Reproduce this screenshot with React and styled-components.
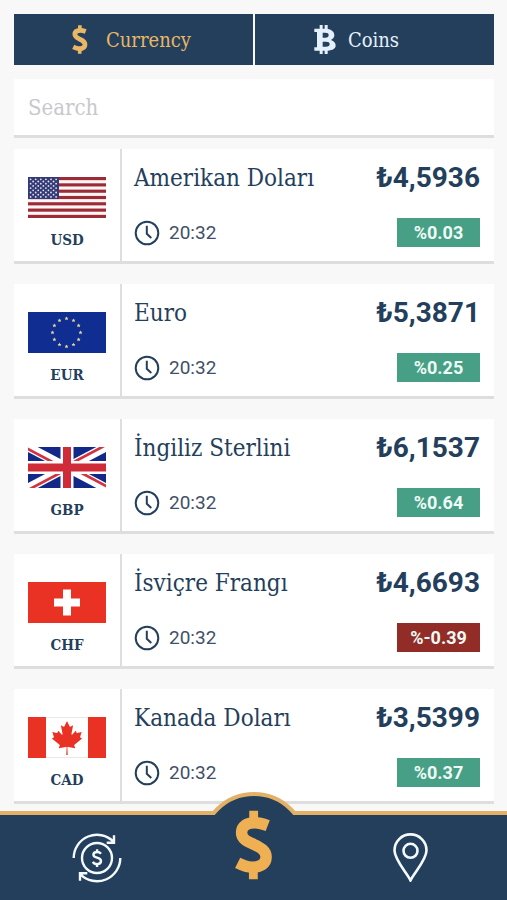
import React from "react";
import styled, { createGlobalStyle } from "styled-components";

const navy = "#243f5c";
const gold = "#efb054";
const slab = `"Roboto Slab", "DejaVu Serif Condensed", "DejaVu Serif", serif`;
const sans = `Roboto, "Liberation Sans", sans-serif`;

const GlobalStyle = createGlobalStyle`
  * {
    box-sizing: border-box;
  }
  body {
    margin: 0;
    background-color: #f8f8f8;
    color: ${navy};
    font-family: ${slab};
  }
  svg {
    display: block;
    flex-shrink: 0;
  }
`;

const Page = styled.div`
  padding: 14px 13px 97px 14px;
`;

const Tabs = styled.div`
  display: grid;
  grid-template-columns: 1fr 1fr;
  gap: 2px;
`;

const Tab = styled.button`
  display: flex;
  align-items: center;
  justify-content: center;
  gap: ${(props) => (props.$active ? "18px" : "12px")};
  height: 51px;
  padding: 0 ${(props) => (props.$active ? "4px" : "36px")} 0 0;
  border: 0;
  background-color: ${navy};
  color: ${(props) => (props.$active ? "#e9b866" : "#e4f1fd")};
  font-family: ${slab};
  font-size: 20px;
  cursor: pointer;
`;

const Search = styled.input`
  display: block;
  width: 100%;
  height: 59px;
  margin: 14px 0 11px;
  padding: 0 14px;
  border: 0;
  border-bottom: 3px solid #dedede;
  outline: 0;
  background-color: white;
  color: ${navy};
  font-family: ${slab};
  font-size: 22px;
  &::placeholder {
    color: #c8c8cc;
    opacity: 1;
  }
`;

const List = styled.ul`
  display: flex;
  flex-direction: column;
  gap: 20px;
  margin: 0;
  padding: 0;
  list-style: none;
`;

const Card = styled.li`
  display: flex;
  height: 115px;
  border-bottom: 3px solid #dedede;
  background-color: white;
`;

const Country = styled.div`
  display: flex;
  flex-direction: column;
  align-items: center;
  gap: 12px;
  width: 108px;
  padding-top: 28px;
  border-right: 2px solid #dedede;
`;

const Code = styled.span`
  font-size: 15px;
  font-weight: bold;
  line-height: 20px;
`;

const Details = styled.div`
  flex: 1;
  display: flex;
  flex-direction: column;
  justify-content: space-between;
  padding: 12px 14px 14px 12px;
`;

const Row = styled.div`
  display: flex;
  align-items: center;
  justify-content: space-between;
`;

const Name = styled.span`
  font-size: 24px;
  line-height: 34px;
`;

const Price = styled.span`
  font-family: ${sans};
  font-size: 28px;
  font-weight: bold;
  line-height: 34px;
`;

const Time = styled.span`
  display: flex;
  align-items: center;
  gap: 9px;
  font-family: ${sans};
  font-size: 19px;
  color: #3f5068;
`;

const Change = styled.span`
  width: 83px;
  background-color: ${(props) => (props.$down ? "#922c26" : "#479f86")};
  color: #eefaf5;
  font-family: ${sans};
  font-size: 18px;
  font-weight: bold;
  line-height: 29px;
  text-align: center;
`;

const BottomBar = styled.nav`
  position: fixed;
  right: 0;
  bottom: 0;
  left: 0;
  display: grid;
  grid-template-columns: repeat(3, 1fr);
  height: 89px;
  padding: 0 18px;
  border-top: 4px solid #e3b165;
  background-color: ${navy};
`;

const Bump = styled.svg`
  position: absolute;
  top: -23px;
  left: 50%;
  transform: translateX(-50%);
`;

const BarLink = styled.a`
  display: flex;
  align-items: center;
  justify-content: center;
  color: #f4faff;
`;

const MainLink = styled(BarLink)`
  position: relative;
  align-items: flex-start;
  margin-top: -5px;
  color: ${gold};
`;

function DollarIcon({ width, height }) {
  return (
    <svg width={width} height={height} viewBox="555 88 116 214" aria-hidden="true">
      <g fill="none" stroke="currentColor">
        <path
          strokeWidth="35"
          d="M655 136C642 131 630 127 616 127C590 127 575 138 575 157C575 177 592 184 612 193C634 203 650 212 650 232C650 252 634 263 607 263C591 263 577 257 563 250"
        />
        <path strokeWidth="27" strokeLinecap="square" d="M612 104V116M611 274V286" />
      </g>
    </svg>
  );
}

function BitcoinIcon() {
  return (
    <svg width="22" height="29" viewBox="189 75 66 87" aria-hidden="true">
      <path
        fill="currentColor"
        fillRule="evenodd"
        d="M190 86H206V75H215V86H221V75H230V87C243 89 250 96 250 106C250 113 246 117 240 120C249 123 254 129 254 136C254 146 246 151 230 152V162H221V152H215V162H206V152H190V142H198V96H190ZM215 98V113H223C230 113 233 111 233 105C233 100 230 98 223 98ZM215 125V140H225C232 140 236 138 236 132C236 127 232 125 225 125Z"
      />
    </svg>
  );
}

function ClockIcon() {
  return (
    <svg width="26" height="26" viewBox="-1 -1 26 26" aria-hidden="true">
      <g fill="none" stroke={navy} strokeWidth="2">
        <circle cx="12" cy="12" r="11.3" />
        <path d="M11.8 4.7V12.8L16.3 17" />
      </g>
    </svg>
  );
}

function ExchangeIcon() {
  return (
    <svg width="50" height="50" viewBox="0 0 50 50" aria-hidden="true">
      <g fill="none" stroke="currentColor" strokeWidth="2.4">
        <circle cx="25" cy="25" r="15" />
        <path d="M1.7 25A23.3 23.3 0 0 1 41.5 8.6M42 2.3V9.7H34.7" />
        <path d="M48.3 25A23.3 23.3 0 0 1 8.5 41.4M8 47.7V40.3H15.3" />
        <path d="M29 20.8C28 19.5 26.8 19 25.1 19C22.9 19 21.4 20.1 21.4 21.8C21.4 25.7 29 23.7 29 28.1C29 30 27.4 31.1 25.2 31.1C23.2 31.1 21.7 30.3 20.8 28.8M25.1 16.3V19M25.1 31V34" />
      </g>
    </svg>
  );
}

function PinIcon() {
  return (
    <svg width="35" height="49" viewBox="0 0 35 49" aria-hidden="true">
      <g fill="none" stroke="currentColor" strokeWidth="2.6">
        <path d="M17.5 47.3C13.5 39.5 1.5 26.5 1.5 17.4A16 16 0 0 1 33.5 17.4C33.5 26.5 21.5 39.5 17.5 47.3Z" />
        <circle cx="17.5" cy="17.8" r="7" />
      </g>
    </svg>
  );
}

function UsFlag() {
  const stripe = 41 / 13;
  const stars = [];
  for (let row = 0; row < 9; row++) {
    for (let col = 0; col < (row % 2 ? 5 : 6); col++) {
      stars.push([2.6 + col * 5.1 + (row % 2 ? 2.55 : 0), 2.3 + row * 2.2]);
    }
  }
  return (
    <>
      <rect width="78" height="41" fill="#fff5f5" />
      {[0, 2, 4, 6, 8, 10, 12].map((i) => (
        <rect key={i} y={i * stripe} width="78" height={stripe} fill="#9c2b38" />
      ))}
      <rect width="31" height={stripe * 7} fill="#343a75" />
      {stars.map(([x, y]) => (
        <circle key={`${x}-${y}`} cx={x} cy={y} r="0.9" fill="#e4e5f2" />
      ))}
    </>
  );
}

function EuFlag() {
  return (
    <>
      <rect width="78" height="41" fill="#102e91" />
      {[...Array(12).keys()].map((i) => {
        const angle = (i * Math.PI) / 6;
        const x = 38.5 + 14 * Math.sin(angle);
        const y = 20.5 - 14 * Math.cos(angle);
        return (
          <path
            key={i}
            transform={`translate(${x} ${y})`}
            fill="#e3d79a"
            d="M0-2L.6-.7H1.9L1 .3L1.3 1.7L0 1L-1.3 1.7L-1 .3L-1.9-.7H-.6Z"
          />
        );
      })}
    </>
  );
}

function UkFlag() {
  return (
    <>
      <rect width="78" height="41" fill="#12298a" />
      <path d="M0 0L78 41M78 0L0 41" stroke="#fff" strokeWidth="9" />
      <path
        d="M-2 1L32 19M80 40L46 22M76 -1L44 16M2 42L34 25"
        stroke="#d3333f"
        strokeWidth="2.6"
      />
      <path d="M39 0V41M0 20.5H78" stroke="#fff" strokeWidth="13" />
      <path d="M39 0V41M0 20.5H78" stroke="#cf2b39" strokeWidth="8" />
    </>
  );
}

function SwissFlag() {
  return (
    <>
      <rect width="78" height="41" fill="#e93223" />
      <path d="M39 7.5V33.5M26 20.5H52" stroke="#fff" strokeWidth="8" />
    </>
  );
}

function CanadaFlag() {
  return (
    <>
      <rect width="78" height="41" fill="#e8e8e8" />
      <rect x="18" y="1" width="42" height="39" fill="#fff" />
      <rect width="18" height="41" fill="#e93223" />
      <rect x="60" width="18" height="41" fill="#e93223" />
      <svg x="23" y="4" width="32" height="34" viewBox="2830 400 3940 4030" preserveAspectRatio="none">
        <path
          fill="#e93223"
          d="M4890 4430l-45-863a95 95 0 0 1 111-98l859 151-116-320a65 65 0 0 1 20-73l941-762-212-99a65 65 0 0 1-34-79l186-572-542 115a65 65 0 0 1-73-38l-105-247-423 454a65 65 0 0 1-111-57l204-1052-327 189a65 65 0 0 1-91-27l-332-652-332 652a65 65 0 0 1-91 27l-327-189 204 1052a65 65 0 0 1-111 57l-423-454-105 247a65 65 0 0 1-73 38l-542-115 186 572a65 65 0 0 1-34 79l-212 99 941 762a65 65 0 0 1 20 73l-116 320 859-151a95 95 0 0 1 111 98l-45 863z"
        />
      </svg>
    </>
  );
}

const currencies = [
  { code: "USD", name: "Amerikan Doları", price: "₺4,5936", change: "%0.03", Flag: UsFlag },
  { code: "EUR", name: "Euro", price: "₺5,3871", change: "%0.25", Flag: EuFlag },
  { code: "GBP", name: "İngiliz Sterlini", price: "₺6,1537", change: "%0.64", Flag: UkFlag },
  { code: "CHF", name: "İsviçre Frangı", price: "₺4,6693", change: "%-0.39", down: true, Flag: SwissFlag },
  { code: "CAD", name: "Kanada Doları", price: "₺3,5399", change: "%0.37", Flag: CanadaFlag },
];

export default function App() {
  return (
    <>
      <GlobalStyle />
      <Page>
        <Tabs>
          <Tab type="button" $active>
            <DollarIcon width={16} height={29} />
            Currency
          </Tab>
          <Tab type="button">
            <BitcoinIcon />
            Coins
          </Tab>
        </Tabs>
        <Search type="search" placeholder="Search" aria-label="Search" />
        <List>
          {currencies.map(({ code, name, price, change, down, Flag }) => (
            <Card key={code}>
              <Country>
                <svg width="78" height="41" viewBox="0 0 78 41" aria-hidden="true">
                  <Flag />
                </svg>
                <Code>{code}</Code>
              </Country>
              <Details>
                <Row>
                  <Name>{name}</Name>
                  <Price>{price}</Price>
                </Row>
                <Row>
                  <Time>
                    <ClockIcon />
                    20:32
                  </Time>
                  <Change $down={down}>{change}</Change>
                </Row>
              </Details>
            </Card>
          ))}
        </List>
      </Page>
      <BottomBar>
        <Bump width="90" height="23" viewBox="0 0 90 23" aria-hidden="true">
          <circle cx="45" cy="54" r="52" fill={navy} stroke="#e3b165" strokeWidth="4" />
        </Bump>
        <BarLink href="#exchange" aria-label="Exchange">
          <ExchangeIcon />
        </BarLink>
        <MainLink href="#rates" aria-label="Rates">
          <DollarIcon width={38} height={70} />
        </MainLink>
        <BarLink href="#nearby" aria-label="Nearby">
          <PinIcon />
        </BarLink>
      </BottomBar>
    </>
  );
}
